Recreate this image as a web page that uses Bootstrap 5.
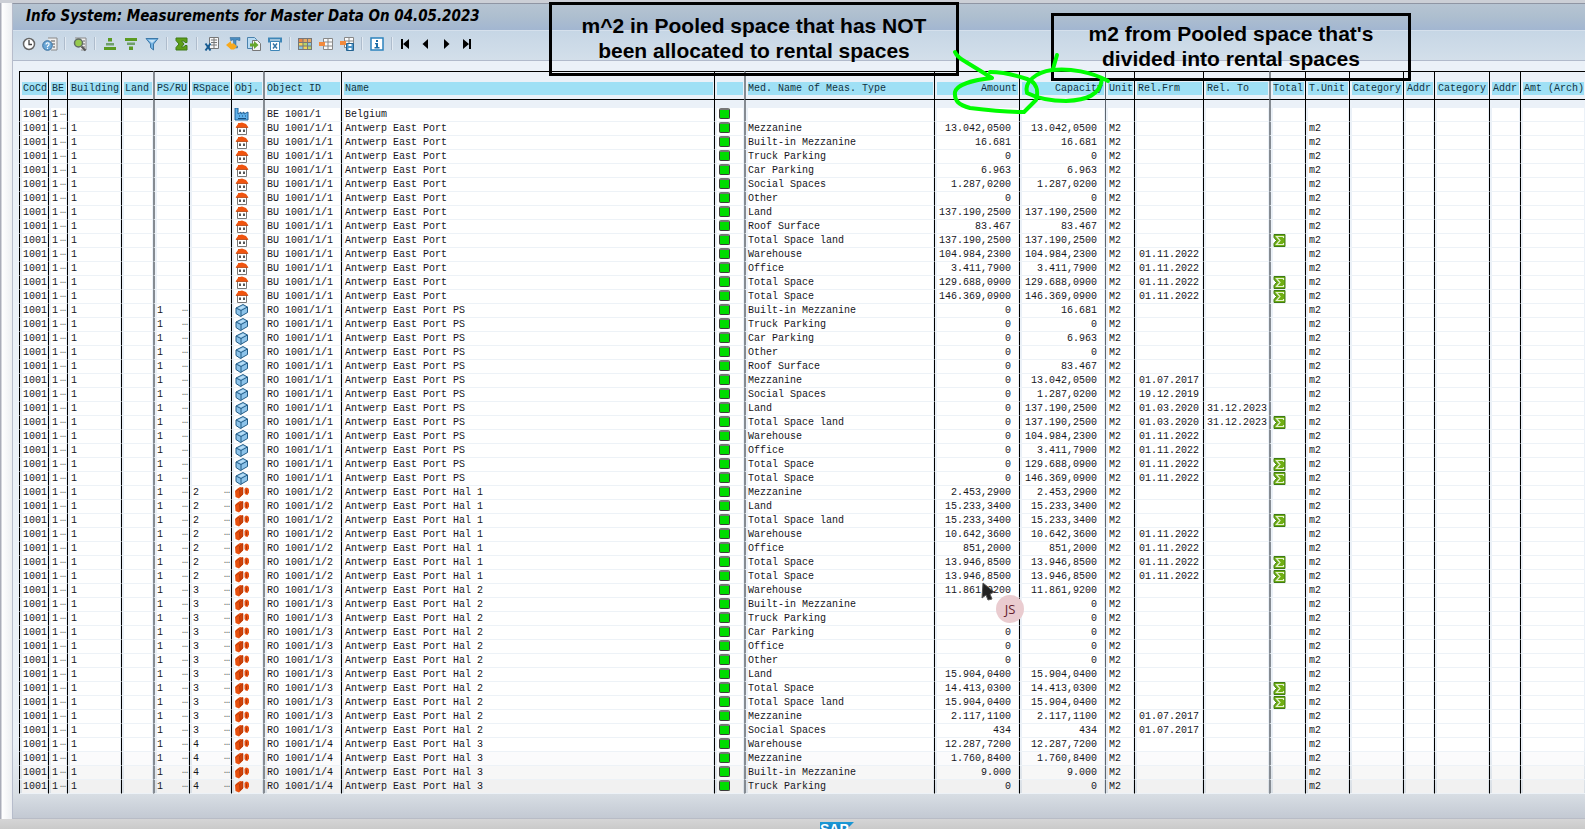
<!DOCTYPE html>
<html lang="en">
<head>
<meta charset="utf-8">
<meta name="viewport" content="width=device-width, initial-scale=1">
<title>Info System: Measurements for Master Data</title>
<link href="https://cdn.jsdelivr.net/npm/bootstrap@5.3.0/dist/css/bootstrap.min.css" rel="stylesheet">
<style>
  body { height: 100vh; overflow: hidden; background: linear-gradient(90deg, #a9acb8 0, #a9acb8 1px, #fff 2px, #eceef1 12px); font-family: "Liberation Sans", Arial, sans-serif; color: #000; }
  .window { margin-left: 12px; border-top: 1px solid #8f95a3; border-left: 1px solid #b6bccb; background: linear-gradient(#ebf1f8 0, #ebf1f8 740px, #d8dee4 790px, #c3c9d3 100%); border-bottom: 1px solid #b8bcc6; padding-bottom: 24px; }
  .topstrip { height: 3px; background: #cccfd6; }
  .titlebar { height: 27px; padding-left: 13px; background: linear-gradient(#b6c4d2, #adbecf 50%, #a2b6d1); border-bottom: 1px solid #d5e0ec; }
  .titlebar h1 { font: italic bold 15px/24px "DejaVu Sans Condensed", "DejaVu Sans", sans-serif; }
  .tools { height: 30px; padding: 0 0 4px 8px; gap: 5px; background: linear-gradient(#c6d6e5, #d3dfea); border-bottom: 1px solid #b1bacb; }
  .tools .btn { width: 16px; height: 16px; line-height: 0; border-radius: 0; }
  .tools svg { width: 16px; height: 16px; }
  .divider { width: 4px; height: 13px; background: linear-gradient(90deg, transparent 1px, #aebccc 1px, #aebccc 2px, #e2eaf2 2px, #e2eaf2 3px, transparent 3px); }
  .sheet { margin: 10px 0 0 6px; }
  .measures { table-layout: fixed; width: 100%; font: 10px/14px "Liberation Mono", "Courier New", monospace; color: #16161c; border-collapse: separate; border-spacing: 0; border-color: #000; }
  .measures th, .measures td { white-space: nowrap; overflow: hidden; border-left: 1px solid #000; background-clip: content-box; text-indent: 1px; }
  .measures th { height: 29px; padding: 10px 1px 4px 2px; line-height: 13px; font-weight: normal; background-color: #9fe0f5; color: #10323f; border-top: 1px solid #000; border-bottom: 1px solid #000; }
  .measures tbody td { height: 14px; padding: 0 1px 0 2px; background-color: #fff; border-bottom: 1px solid #edf2f7; line-height: 13px; }
  .measures tbody .spacer td { height: 8px; background-color: transparent; border-bottom: 0; }
  .measures th:nth-child(5), .measures td:nth-child(5),
  .measures th:nth-child(8), .measures td:nth-child(8),
  .measures th:nth-child(11), .measures td:nth-child(11),
  .measures th:nth-child(17), .measures td:nth-child(17) { border-left: 2px solid #858b92; text-indent: 0; }
  .measures th:nth-child(14), .measures td:nth-child(14) { border-left-color: #5d656e; }
  .measures .amount { text-align: right; }
  .measures td.amount span { margin-right: 7px; }
  .measures th.amount span { margin-right: 1px; }
  .measures td.date { text-indent: 2px; }
  .measures tr:nth-last-child(3) td { background-color: #fbfbfc; }
  .measures tr:nth-last-child(2) td { background-color: #f7f7f7; }
  .measures tr:last-child td { background-color: #f1f1f1; }
  .measures svg { display: block; width: 16px; height: 13px; }
  .more { float: right; line-height: 9px; text-indent: 0; color: #555; }
  .status { display: block; width: 11px; height: 11px; margin: 0 0 2px 2px; background: #00dc00; border: 1px solid #3c3c3c; border-top: 2px solid #777; border-radius: 2px; }
  .footer { background: linear-gradient(#d5d5d6, #cacaca); overflow: hidden; padding-left: 88px; }
  .notes { position: absolute; top: 0; right: 0; width: 1040px; height: 640px; pointer-events: none; }
  .callout-box { position: absolute; border: 3px solid #000; font-size: 21px; line-height: 25px; font-weight: bold; text-align: center; }
  .unallocated { top: 2px; left: 4px; width: 410px; height: 74px; padding-top: 8px; }
  .divided { top: 13px; left: 506px; width: 360px; height: 68px; padding-top: 5px; }
  .ink { position: absolute; inset: 0; width: 1040px; height: 640px; }
  .initials { position: absolute; left: 451px; top: 595px; width: 28px; height: 28px; border-radius: 50%; background: #eaccd0; color: #64202c; font: 13px/28px "Open Sans", sans-serif; text-align: center; }
</style>
</head>
<body class="d-flex flex-column position-relative">

<svg class="d-none" aria-hidden="true">
  <symbol id="plant" viewBox="0 0 16 13"><path d="M1 12V0h3v6l3-2v2l3-2v2l4-2v8z" fill="#5fb0ea" stroke="#1f5f95"/><path d="M5 8h1m2 0h1m2 0h1M4 10.500h8" stroke="#174a78"/></symbol>
  <symbol id="house" viewBox="0 0 16 13"><path d="M3.500 5h9v7.500h-9z" fill="#fff" stroke="#777"/><path d="M1.500 5.500L4 2V1h2l2-.5L12 2l2.500 3.500z" fill="#f0540f"/><path d="M2 5.500h12" stroke="#b8420f" stroke-width=".7"/><path d="M5 7.500h2v2.500H5zm4 0h2v2.500H9z" fill="#555"/></symbol>
  <symbol id="cube" viewBox="0 0 16 13"><path d="M2 4l7-3.500 4.500 2.500v5.500L6.500 12.500 2 9.500z" fill="#8cc3ea" stroke="#235c86"/><path d="M2 4l5 2.500L13.500 3M7 6.500v6" fill="none" stroke="#235c86"/><path d="M4.500 4L9 1.800 11 3 7 5.200z" fill="#b9def6"/></symbol>
  <symbol id="units" viewBox="0 0 16 13"><path d="M1 5l2-2 3-2 3 .5v7L6.500 11 5 12.500 1.500 11z" fill="#e8500f"/><path d="M5.500 4L9 1.500V8l-3 2.500zM2 5l3-2" fill="#d2430a" stroke="#9f3007" stroke-width=".6"/><path d="M10.500 3l1.500-1.500 2 .5 1 1.500v3L13.500 9l-2-.5-1-1.500z" fill="#e8500f"/><path d="M12.500 3.500v4" stroke="#9f3007" stroke-width=".8"/></symbol>
  <symbol id="sigma" viewBox="0 0 16 13"><path d="M1 .5h11v12H1V9.500l2.500-3L1 3.500z" fill="#6fae12" stroke="#3f7a16"/><path d="M10.500 4V2.500h-7l3.500 4-3.500 4h7V9" fill="none" stroke="#e4f1d2" stroke-width="1.200"/></symbol>
</svg>

<div class="topstrip flex-shrink-0"></div>
<main class="window flex-shrink-0">
  <header class="titlebar"><h1 class="m-0">Info System: Measurements for Master Data On 04.05.2023</h1></header>
  <nav class="tools d-flex align-items-center" aria-label="List tools">
    <button class="btn p-0 border-0" type="button" aria-label="Date"><svg viewBox="0 0 16 16"><circle cx="8" cy="8" r="5.500" fill="#fff" stroke="#666" stroke-width="1.500"/><path d="M8 4v4.500h3" fill="none" stroke="#444" stroke-width="1.300"/></svg></button>
    <button class="btn p-0 border-0" type="button" aria-label="Selections"><svg viewBox="0 0 16 16"><path d="M6 2h9v12H9" fill="#eee" stroke="#888"/><path d="M9 5h4M10 8h3M11 11h2" stroke="#555"/><circle cx="5.500" cy="9.500" r="4.800" fill="#69a6d6" stroke="#396f9d"/><path d="M4 8.500q0-1.700 1.600-1.700T7 8.500q0 1-1.500 1.800v1M5.500 12v1" fill="none" stroke="#fff" stroke-width="1.200"/></svg></button>
    <span class="divider"></span>
    <button class="btn p-0 border-0" type="button" aria-label="Details"><svg viewBox="0 0 16 16"><path d="M3 2h11v12H9" fill="#eee" stroke="#888"/><path d="M11 5h2m-2 3h2m-2 3h2" stroke="#666"/><circle cx="6.500" cy="7" r="4" fill="#96ca4d" stroke="#606b66" stroke-width="1.500"/><path d="M9.500 10.500l4 4" stroke="#555" stroke-width="2"/></svg></button>
    <span class="divider"></span>
    <button class="btn p-0 border-0" type="button" aria-label="Sort ascending"><svg viewBox="0 0 16 16"><path d="M2 11h12v3H2z" fill="#5b9b21"/><path d="M4 7h8v2.500H4z" fill="#6f9f6b"/><path d="M6 2h4v3.500H6z" fill="#5b9b21"/></svg></button>
    <button class="btn p-0 border-0" type="button" aria-label="Sort descending"><svg viewBox="0 0 16 16"><path d="M2 2h12v3H2z" fill="#5b9b21"/><path d="M4 6.500h8V9H4z" fill="#6f9f6b"/><path d="M6 10.500h4V14H6z" fill="#5b9b21"/></svg></button>
    <button class="btn p-0 border-0" type="button" aria-label="Filter"><svg viewBox="0 0 16 16"><path d="M2 2.500h12L9.500 8v6l-3-2.500V8z" fill="#75b3e2" stroke="#3b78a8"/><path d="M4.500 4h7L8 7z" fill="#c7e2f5"/></svg></button>
    <span class="divider"></span>
    <button class="btn p-0 border-0" type="button" aria-label="Total"><svg viewBox="0 0 16 16"><path d="M2 2h11v4.500h-2L10 5H7.500l2.500 3-2.500 3H10l1-1.500h2V14H2v-2.500L5 8 2 4.500z" fill="#5d9e18" stroke="#3f7a16"/></svg></button>
    <span class="divider"></span>
    <button class="btn p-0 border-0" type="button" aria-label="Spreadsheet"><svg viewBox="0 0 16 16"><path d="M5.500 1.500h9v11h-9z" fill="#f7f7f7" stroke="#777"/><path d="M7 4h6M7 6.500h6M7 9h6M10 2v10" stroke="#777"/><path d="M1.500 7.500l5 7m0-7l-5 7" stroke="#165b91" stroke-width="2"/></svg></button>
    <button class="btn p-0 border-0" type="button" aria-label="Word processing"><svg viewBox="0 0 16 16"><path d="M5 1.500h10v3h-1.500L13 4h-2v6h1.500v2H7v-2h1.500V4h-2L6 5z" fill="#4a8cc0" stroke="#2e658f" stroke-width=".5"/><path d="M1 9l5-4v2.500h3l3 3-3 3H6L1 9z" fill="#f8a91d"/></svg></button>
    <button class="btn p-0 border-0" type="button" aria-label="Local file"><svg viewBox="0 0 16 16"><path d="M1.500 1.500h7l2 2v9h-9z" fill="#b9dbf2" stroke="#4a82ad"/><path d="M6.500 4.500h5l3 3v7h-8z" fill="#f4f4f4" stroke="#777"/><path d="M4 7.500h4V5l4.500 4L8 13v-2.500H4z" fill="#66a62b"/></svg></button>
    <button class="btn p-0 border-0" type="button" aria-label="Mail recipient"><svg viewBox="0 0 16 16"><path d="M1 1.500h14v5H1z" fill="#3e86b7"/><path d="M3 4h10" stroke="#fff"/><path d="M3.500 5.500h9v9h-9z" fill="#fff" stroke="#3e86b7"/><path d="M6 7.500l4 5m0-5l-4 5" stroke="#3475a5" stroke-width="1.500"/></svg></button>
    <span class="divider"></span>
    <button class="btn p-0 border-0" type="button" aria-label="Choose layout"><svg viewBox="0 0 16 16"><path d="M1 2h14v12H1z" fill="#777"/><path d="M2 3h3.500v3H2z" fill="#e98648"/><path d="M6.500 3H10v3H6.500zM11 3h3v3h-3z" fill="#e6a964"/><path d="M2 7h3.500v2.500H2z" fill="#f4d35a"/><path d="M6.500 7H10v2.500H6.500zM11 10.500h3V13h-3z" fill="#b7d36a"/><path d="M11 7h3v2.500h-3zM2 10.500h3.500V13H2z" fill="#8cc6df"/><path d="M6.500 10.500H10V13H6.500z" fill="#f4d35a"/></svg></button>
    <button class="btn p-0 border-0" type="button" aria-label="Change layout"><svg viewBox="0 0 16 16"><path d="M5.500 2.500h9v11h-9zM5 6h10M5 10h10M10 2v12" fill="#fafafa" stroke="#888"/><path d="M1 6h6v4H1z" fill="#f28a3d"/></svg></button>
    <button class="btn p-0 border-0" type="button" aria-label="Save layout"><svg viewBox="0 0 16 16"><path d="M5.500 1.500h9v10h-9zM5 5h10M10 1v10" fill="#fafafa" stroke="#888"/><path d="M1 5h6v4H1z" fill="#f28a3d"/><path d="M7.500 7.500h7v7h-7z" fill="#4e95c8" stroke="#246391"/><path d="M9.500 8h3v2h-3zm0 4h3v2h-3z" fill="#fff"/></svg></button>
    <span class="divider"></span>
    <button class="btn p-0 border-0" type="button" aria-label="Information"><svg viewBox="0 0 16 16"><path d="M2 2h12v12H2z" fill="#fff" stroke="#2d83bd" stroke-width="1.500"/><path d="M7 4h2v2H7zM6 7h3v4h1.500v1.500h-5V11H7V8.300H6z" fill="#1d6ea8"/></svg></button>
    <span class="divider"></span>
    <button class="btn p-0 border-0" type="button" aria-label="First column"><svg viewBox="0 0 16 16"><path d="M2 3h2v10H2zM10 3v10L4 8z"/></svg></button>
    <button class="btn p-0 border-0" type="button" aria-label="Previous column"><svg viewBox="0 0 16 16"><path d="M8 3v10L2.500 8z"/></svg></button>
    <button class="btn p-0 border-0" type="button" aria-label="Next column"><svg viewBox="0 0 16 16"><path d="M3 3v10l5.500-5z"/></svg></button>
    <button class="btn p-0 border-0" type="button" aria-label="Last column"><svg viewBox="0 0 16 16"><path d="M7 3h2v10H7zM1 3v10l6-5z"/></svg></button>
  </nav>

  <div class="sheet">
    <table class="measures table mb-0">
      <colgroup id="widths"></colgroup>
      <thead><tr>
        <th>CoCd</th><th>BE</th><th>Building</th><th>Land</th><th>PS/RU</th><th>RSpace</th><th>Obj.</th><th>Object ID</th><th>Name</th><th></th><th>Med. Name of Meas. Type</th><th class="amount"><span>Amount</span></th><th class="amount"><span>Capacity</span></th><th>Unit</th><th>Rel.Frm</th><th>Rel. To</th><th>Total</th><th>T.Unit</th><th>Category</th><th>Addr</th><th>Category</th><th>Addr</th><th>Amt (Arch)</th>
      </tr></thead>
      <tbody id="rows"></tbody>
    </table>
  </div>
</main>

<footer class="footer flex-grow-1 text-center">
  <svg class="d-block mx-auto" width="36" height="20" viewBox="0 0 36 20" role="img" aria-label="SAP"><defs><linearGradient id="sapblue" x2="0" y2="1"><stop stop-color="#1a9ad7"/><stop offset="1" stop-color="#1661ae"/></linearGradient></defs><path d="M1 3h34L18 20H1z" fill="url(#sapblue)"/><text x="1" y="15" font-family="Liberation Sans, Arial, sans-serif" font-weight="bold" font-size="14" fill="#fff">SAP</text></svg>
</footer>

<div class="notes">
  <div class="callout-box unallocated">m^2 in Pooled space that has NOT<br>been allocated to rental spaces</div>
  <div class="callout-box divided">m2 from Pooled space that's<br>divided into rental spaces</div>
  <svg class="ink" viewBox="545 0 1040 640" aria-hidden="true">
    <g fill="none" stroke="#00fc00" stroke-width="4" stroke-linecap="round" stroke-linejoin="round">
      <path d="M955 52Q957 57 966 62L992 78C972 80 957 85 955 92C954 101 959 105 970 108C986 110 1005 112 1024 112L1036 100C1039 90 1036 82 1027 79C1015 75 1002 72 990 72"/>
      <path d="M1057 55L1053 69"/>
      <path d="M1108 81C1092 72 1070 68 1052 70C1036 72 1024 82 1027 93C1035 97 1048 101 1066 101C1087 100 1100 95 1102 79"/>
    </g>
    <path d="M983 583l11 9-4 2 2 5-4 1-2-5-4 3z" fill="#222" stroke="#555"/>
  </svg>
  <div class="initials">JS</div>
</div>

<script>
  // Column widths in pixels; the Name column takes what is left.
  const widths = [29, 19, 54, 32, 36, 42, 32, 78, 0, 30, 190, 85, 86, 29, 69, 66, 36, 44, 54, 31, 55, 31, 65];
  document.getElementById('widths').innerHTML = widths.map(w => w ? `<col style="width:${w}px">` : '<col>').join('');

  // Per object: icon, id, name, PS/RU, RSpace, then "type|amount|capacity|from|to|sum" lines.
  const groups = [
    ['plant', 'BE 1001/1', 'Belgium', '', '', ['']],
    ['house', 'BU 1001/1/1', 'Antwerp East Port', '', '', [
      'Mezzanine|13.042,0500|13.042,0500', 'Built-in Mezzanine|16.681|16.681', 'Truck Parking|0|0', 'Car Parking|6.963|6.963',
      'Social Spaces|1.287,0200|1.287,0200', 'Other|0|0', 'Land|137.190,2500|137.190,2500', 'Roof Surface|83.467|83.467',
      'Total Space land|137.190,2500|137.190,2500|||s', 'Warehouse|104.984,2300|104.984,2300|01.11.2022', 'Office|3.411,7900|3.411,7900|01.11.2022',
      'Total Space|129.688,0900|129.688,0900|01.11.2022||s', 'Total Space|146.369,0900|146.369,0900|01.11.2022||s']],
    ['cube', 'RO 1001/1/1', 'Antwerp East Port PS', '1', '', [
      'Built-in Mezzanine|0|16.681', 'Truck Parking|0|0', 'Car Parking|0|6.963', 'Other|0|0', 'Roof Surface|0|83.467',
      'Mezzanine|0|13.042,0500|01.07.2017', 'Social Spaces|0|1.287,0200|19.12.2019', 'Land|0|137.190,2500|01.03.2020|31.12.2023',
      'Total Space land|0|137.190,2500|01.03.2020|31.12.2023|s', 'Warehouse|0|104.984,2300|01.11.2022', 'Office|0|3.411,7900|01.11.2022',
      'Total Space|0|129.688,0900|01.11.2022||s', 'Total Space|0|146.369,0900|01.11.2022||s']],
    ['units', 'RO 1001/1/2', 'Antwerp East Port Hal 1', '1', '2', [
      'Mezzanine|2.453,2900|2.453,2900', 'Land|15.233,3400|15.233,3400', 'Total Space land|15.233,3400|15.233,3400|||s',
      'Warehouse|10.642,3600|10.642,3600|01.11.2022', 'Office|851,2000|851,2000|01.11.2022',
      'Total Space|13.946,8500|13.946,8500|01.11.2022||s', 'Total Space|13.946,8500|13.946,8500|01.11.2022||s']],
    ['units', 'RO 1001/1/3', 'Antwerp East Port Hal 2', '1', '3', [
      'Warehouse|11.861,9200|11.861,9200', 'Built-in Mezzanine||0', 'Truck Parking||0', 'Car Parking|0|0', 'Office|0|0', 'Other|0|0',
      'Land|15.904,0400|15.904,0400', 'Total Space|14.413,0300|14.413,0300|||s', 'Total Space land|15.904,0400|15.904,0400|||s',
      'Mezzanine|2.117,1100|2.117,1100|01.07.2017', 'Social Spaces|434|434|01.07.2017']],
    ['units', 'RO 1001/1/4', 'Antwerp East Port Hal 3', '1', '4', [
      'Warehouse|12.287,7200|12.287,7200', 'Mezzanine|1.760,8400|1.760,8400', 'Built-in Mezzanine|9.000|9.000', 'Truck Parking|0|0']]
  ];
  const more = '<span class="more">…</span>';
  const icon = id => `<svg><use href="#${id}"/></svg>`;
  const td = (html, cls) => `<td${cls ? ` class="${cls}"` : ''}>${html || ''}</td>`;
  let html = '<tr class="spacer">' + '<td></td>'.repeat(23) + '</tr>';
  for (const [kind, id, name, ps, space, lines] of groups) {
    for (const line of lines) {
      const [type, amount, capacity, from, to, sum] = line.split('|');
      html += '<tr>' + td('1001') + td('1' + more) + td(type && '1') + td() + td(ps && ps + more) + td(space && space + more) +
        td(icon(kind)) + td(id) + td(name) + td('<span class="status"></span>') + td(type) +
        td(amount && `<span>${amount}</span>`, 'amount') + td(capacity && `<span>${capacity}</span>`, 'amount') +
        td(type && 'M2') + td(from, 'date') + td(to) + td(sum && icon('sigma')) + td(type && 'm2') + td().repeat(5) + '</tr>';
    }
  }
  document.getElementById('rows').innerHTML = html;
</script>
<script src="https://cdn.jsdelivr.net/npm/bootstrap@5.3.0/dist/js/bootstrap.bundle.min.js"></script>
</body>
</html>
